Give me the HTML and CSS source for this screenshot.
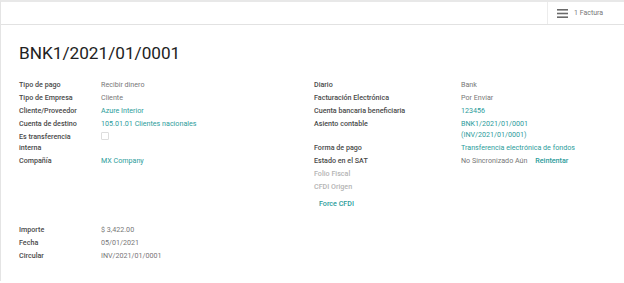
FILE: index.html
```html
<!DOCTYPE html>
<html lang="es">
<head>
    <meta charset="UTF-8">
    <title>BNK1/2021/01/0001</title>
    <link rel="stylesheet" href="styles.css">
</head>
<body>
    <div class="panel">
        <div class="panel-spacer"></div>
        <button class="smart-btn">
            <svg class="burger" width="11" height="9" viewBox="0 0 11 9"><rect y="0" width="11" height="1.6"/><rect y="3.7" width="11" height="1.6"/><rect y="7.4" width="11" height="1.6"/></svg>
            <span>1 Factura</span>
        </button>
    </div>

    <div class="sheet">
        <h1 class="title">BNK1/2021/01/0001</h1>

        <div class="groups">
            <table class="group left">
                <tr><th>Tipo de pago</th><td>Recibir dinero</td></tr>
                <tr><th>Tipo de Empresa</th><td>Cliente</td></tr>
                <tr><th>Cliente/Proveedor</th><td><a>Azure Interior</a></td></tr>
                <tr><th>Cuenta de destino</th><td><a>105.01.01 Clientes nacionales</a></td></tr>
                <tr><th>Es transferencia<br>interna</th><td><span class="check"></span></td></tr>
                <tr><th>Compañía</th><td><a>MX Company</a></td></tr>
            </table>

            <table class="group right">
                <tr><th>Diario</th><td>Bank</td></tr>
                <tr><th>Facturación Electrónica</th><td>Por Enviar</td></tr>
                <tr><th>Cuenta bancaria beneficiaria</th><td><a>123456</a></td></tr>
                <tr><th>Asiento contable</th><td><a>BNK1/2021/01/0001<br>(INV/2021/01/0001)</a></td></tr>
                <tr><th>Forma de pago</th><td><a>Transferencia electrónica de fondos</a></td></tr>
                <tr><th>Estado en el SAT</th><td>No Sincronizado Aún <a class="retry">Reintentar</a></td></tr>
                <tr class="muted"><th>Folio Fiscal</th><td></td></tr>
                <tr class="muted"><th>CFDI Origen</th><td></td></tr>
                <tr><th colspan="2"><a class="force">Force CFDI</a></th></tr>
            </table>
        </div>

        <table class="group bottom">
            <tr><th>Importe</th><td>$ 3,422.00</td></tr>
            <tr><th>Fecha</th><td>05/01/2021</td></tr>
            <tr><th>Circular</th><td>INV/2021/01/0001</td></tr>
        </table>
    </div>
</body>
</html>
```

FILE: styles.css
```css
body {
    margin: 0;
    font-family: Roboto, "Liberation Sans", sans-serif;
    font-size: 7.15px;
    color: #4a4a4a;
    background: #ffffff;
    border-top: 2px solid #e8e8e8;
    border-left: 1px solid #e4e4e4;
    min-height: 281px;
    box-sizing: border-box;
}
.panel {
    display: flex;
    height: 22px;
    border-bottom: 1px solid #e2e2e2;
}
.panel-spacer { flex: 1; }
.smart-btn {
    display: flex;
    align-items: center;
    gap: 6px;
    width: 77px;
    padding: 0 0 0 9px;
    border: none;
    border-left: 1px solid #ececec;
    background: none;
    font-family: inherit;
    font-size: 7px;
    color: #777;
}
.burger { fill: #6a6a6a; }
.sheet {
    padding: 0 18px;
}
.title {
    margin: 0;
    padding: 17px 0 15px;
    font-size: 17.2px;
    font-weight: 400;
    line-height: 22px;
    color: #222;
}
.groups {
    display: grid;
    grid-template-columns: 295px 1fr;
}
.group {
    border-collapse: collapse;
    align-self: start;
}
.group th, .group td {
    padding: 1.3px 0;
    line-height: 10.4px;
    vertical-align: top;
    text-align: left;
}
.group th {
    font-weight: 500;
    color: #4a4a4a;
}
.group td {
    color: #777;
}
.left th { width: 82px; }
.right th { width: 147px; }
.bottom { margin-top: 13px; }
.bottom th { width: 82px; }
a { color: #2b9c9b; }
.retry { margin-left: 6px; font-weight: 500; }
.muted th { color: #b4b4b4; }
.force {
    display: inline-block;
    margin: 4px 0 0 5px;
    font-weight: 500;
}
.check {
    display: inline-block;
    width: 6px;
    height: 6px;
    border: 1px solid #ddd;
    border-radius: 1px;
}
```
